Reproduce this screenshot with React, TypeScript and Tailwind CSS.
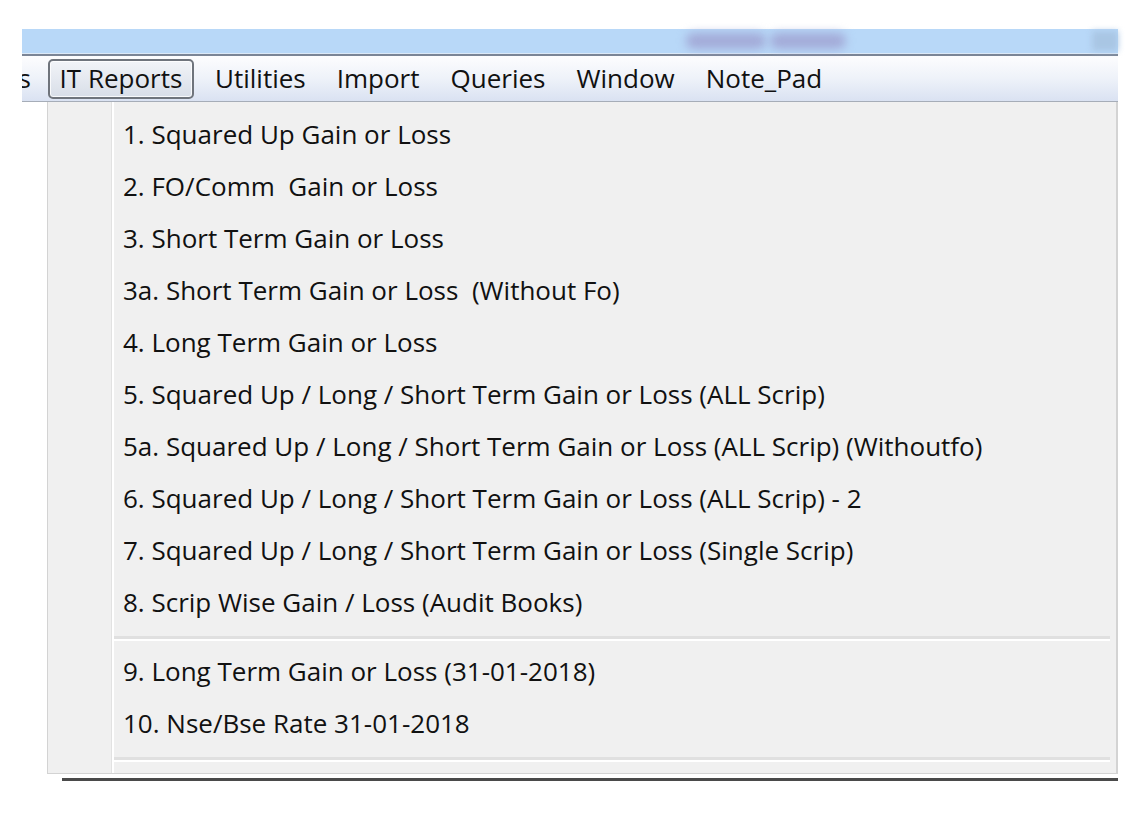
import React from "react";

const menuBar = ["Utilities", "Import", "Queries", "Window", "Note_Pad"];

const groupOne = [
  "1. Squared Up Gain or Loss",
  "2. FO/Comm\u00a0 Gain or Loss",
  "3. Short Term Gain or Loss",
  "3a. Short Term Gain or Loss\u00a0 (Without Fo)",
  "4. Long Term Gain or Loss",
  "5. Squared Up / Long / Short Term Gain or Loss (ALL Scrip)",
  "5a. Squared Up / Long / Short Term Gain or Loss (ALL Scrip) (Withoutfo)",
  "6. Squared Up / Long / Short Term Gain or Loss (ALL Scrip) - 2",
  "7. Squared Up / Long / Short Term Gain or Loss (Single Scrip)",
  "8. Scrip Wise Gain / Loss (Audit Books)",
];

const groupTwo = ["9. Long Term Gain or Loss (31-01-2018)", "10. Nse/Bse Rate 31-01-2018"];

function Item({ label }: { label: string }) {
  return (
    <div className="h-[52px] flex items-center pl-[76px] whitespace-pre text-[26px] text-[#111111]">
      {label}
    </div>
  );
}

function Separator() {
  return (
    <div className="ml-[67px] mr-[3px] mt-[8px] mb-[4px]">
      <div className="h-[3px] bg-[#e0e0e0]" />
      <div className="h-[2px] bg-white" />
    </div>
  );
}

export default function App() {
  return (
    <div
      className="min-h-screen bg-white pt-[29px] pl-[22px]"
      style={{ fontFamily: '"Open Sans", "Noto Sans", sans-serif' }}
    >
      <div className="w-[1096px]">
        {/* window title strip, title text blurred out */}
        <div className="h-[24px] bg-[#b8d8f8] flex items-center">
          <div className="ml-[664px] w-[80px] h-[16px] rounded-full bg-[#a3abd8] blur-[5px]" />
          <div className="ml-[4px] w-[76px] h-[16px] rounded-full bg-[#a3abd8] blur-[5px]" />
          <div className="ml-auto w-[26px] h-[20px] bg-[#a9c6e4] blur-[3px]" />
        </div>
        <div className="h-px bg-[#dce9f7]" />
        <div className="h-[2px] bg-[#7b8596]" />

        {/* menu bar */}
        <div className="h-[46px] bg-gradient-to-b from-[#fdfdfe] via-[#eef2f9] to-[#dae2f2] border-b border-[#a6adb8] flex items-center text-[26px] text-[#111111]">
          <span className="w-[26px] overflow-hidden flex justify-end pr-[17px]">
            <span>s</span>
          </span>
          <span className="h-[40px] w-[146px] flex items-center justify-center rounded-[5px] border-2 border-[#6f747c] bg-gradient-to-b from-[#f2f4f8] to-[#d8dee8] shadow-[inset_0_0_0_1px_rgba(255,255,255,0.8)]">
            IT Reports
          </span>
          <div className="flex gap-[31px] ml-[21px]">
            {menuBar.map((m) => (
              <span key={m}>{m}</span>
            ))}
          </div>
        </div>

        {/* dropdown */}
        <div className="ml-[25px] w-[1071px] h-[672px] bg-[#f0f0f0] border-l border-r-2 border-b border-[#d3d3d3] flex">
          <div className="w-[64px] shrink-0 border-r border-[#e2e2e2]" />
          <div className="w-[2px] bg-white shrink-0" />
          <div className="flex-1 -ml-[67px] pt-[6px] pr-[3px]">
            {groupOne.map((l) => (
              <Item key={l} label={l} />
            ))}
            <Separator />
            {groupTwo.map((l) => (
              <Item key={l} label={l} />
            ))}
            <div className="mt-[2px]">
              <Separator />
            </div>
          </div>
        </div>

        {/* drop shadow under the menu */}
        <div className="ml-[40px] mt-[4px] w-[1056px] h-[3px] bg-[#4a4a4a]" />
      </div>
    </div>
  );
}
